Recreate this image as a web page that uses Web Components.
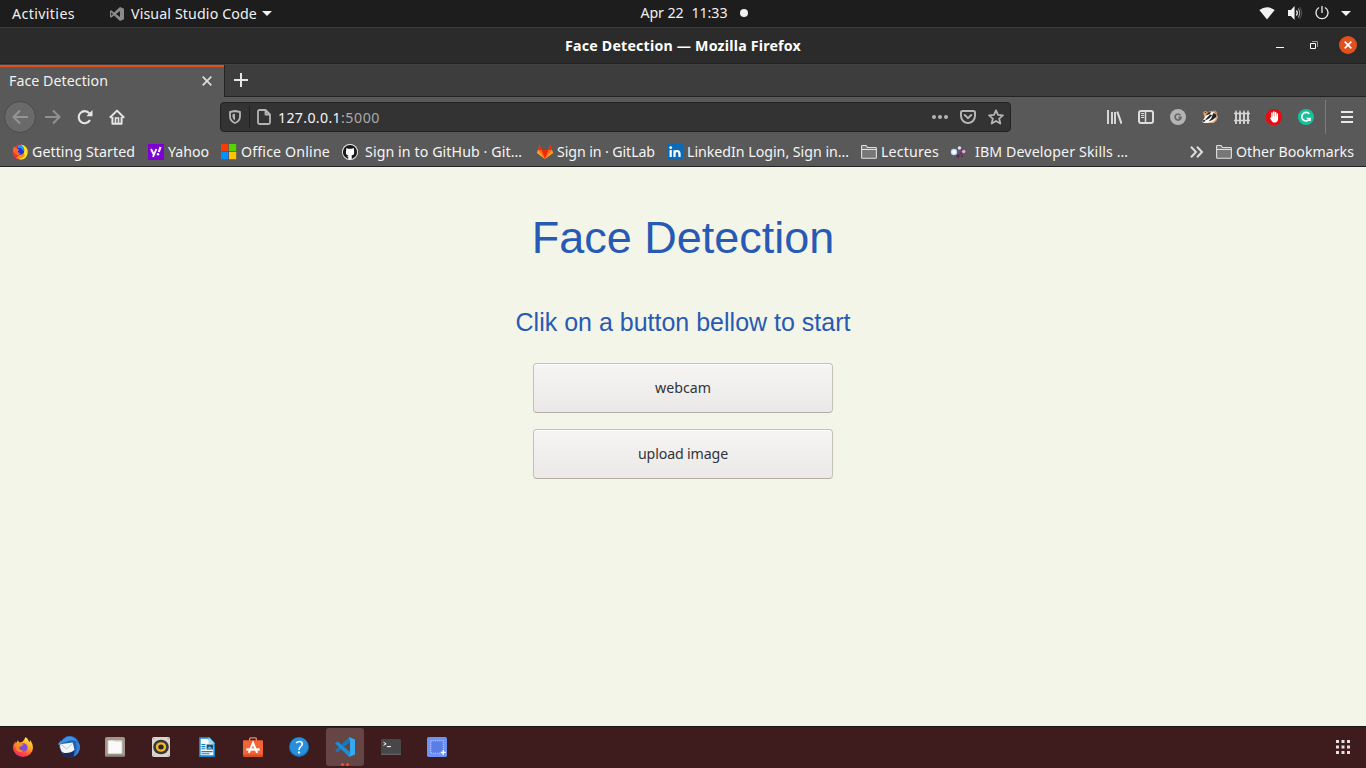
<!DOCTYPE html>
<html lang="en">
<head>
<meta charset="utf-8">
<title>Face Detection</title>
<style>
html,body{margin:0;height:100%;overflow:hidden;background:#f3f5e8;font-family:"Noto Sans","Open Sans",sans-serif}
</style>
</head>
<body>
<desk-top></desk-top>
<script>
const ICONS = {
  code: [14,14,'<path fill="#8a8a8a" d="M10 0l4 1.700v10.600L10 14 4 8.500 1.200 10.800 0 10V4l1.200-.8L4 5.500zM10 4L6 7l4 3zM1.200 5.300v3.400L3 7z"/>'],
  caret: [10,5,'<path fill="#f2f2f2" d="M0 0h10L5 5z"/>'],
  wifi: [16,13,'<path fill="#f2f2f2" d="M.3 3Q8-2.600 15.700 3L8 12.500z"/>'],
  sound: [16,14,'<path fill="#f2f2f2" d="M0 4h3l4-4v14l-4-4H0z"/><path d="M9 4.500q2 2.500 0 5" fill="none" stroke="#f2f2f2" stroke-width="1.300"/><path d="M11 2.500q3 4.500 0 9" fill="none" stroke="#aaa" stroke-width="1.100"/><path d="M12.500 1q4 6 0 12" fill="none" stroke="#555"/>'],
  power: [14,14,'<path d="M4 1.500a6 6 0 1 0 6 0M7 0v7" fill="none" stroke="#eee" stroke-width="1.300"/>'],
  restore: [8,8,'<path d="M.5 2.500h5v5h-5z" fill="none" stroke="#fff"/><path d="M2 .5h5.500V6" fill="none" stroke="#999"/>'],
  wclose: [18,18,'<circle cx="9" cy="9" r="9" fill="#e2501d"/><path d="M5.700 5.700l6.600 6.600m0-6.600l-6.600 6.600" stroke="#fff" stroke-width="1.700"/>'],
  x: [10,10,'<path d="M.7.7l8.600 8.600m0-8.600L.7 9.300" stroke="#dedede" stroke-width="1.700"/>'],
  plus: [14,14,'<path d="M7 0v14M0 7h14" stroke="#e6e6e6" stroke-width="2"/>'],
  back: [16,16,'<path d="M8 1.500L1.500 8 8 14.500M1.500 8H16" fill="none" stroke="#949494" stroke-width="2"/>'],
  forward: [16,16,'<path d="M8 1.500L14.500 8 8 14.500M14.500 8H0" fill="none" stroke="#919191" stroke-width="2"/>'],
  reload: [16,16,'<path d="M13 11A6 6 0 1 1 12.300 4.300" fill="none" stroke="#e6e6e6" stroke-width="2.100"/><path d="M15.500 1v6.200H9.300z" fill="#e6e6e6"/>'],
  home: [16,16,'<path d="M.8 8.800L8 1.600l7.200 7.200M3.400 8v6.800h9.200V8" fill="none" stroke="#e6e6e6" stroke-width="2" stroke-linejoin="round"/><path d="M6.500 14V9h3v5" fill="none" stroke="#e6e6e6" stroke-width="1.600"/>'],
  shield: [12,14,'<path d="M6 1L11 2v4.500Q11 11 6 13 1 11 1 6.500V2z" fill="none" stroke="#b5b5b5" stroke-width="1.800" stroke-linejoin="round"/><path d="M6 3.700v6.600Q3.500 9 3.500 6.500V4.200z" fill="#b5b5b5"/>'],
  page: [14,16,'<path d="M8.500 1H2.500Q1 1 1 2.500v11Q1 15 2.500 15h9q1.500 0 1.500-1.500V5.500zM8.500 1v4.500H13" fill="none" stroke="#b5b5b5" stroke-width="1.800" stroke-linejoin="round"/>'],
  dots: [16,4,'<g fill="#b5b5b5"><circle cx="2" cy="2" r="2"/><circle cx="8" cy="2" r="2"/><circle cx="14" cy="2" r="2"/></g>'],
  pocket: [16,14,'<path d="M2.500 1h11Q15 1 15 2.500V6A7 7 0 0 1 1 6V2.500Q1 1 2.500 1z" fill="none" stroke="#b5b5b5" stroke-width="2"/><path d="M4.700 5L8 8.200 11.300 5" fill="none" stroke="#b5b5b5" stroke-width="2" stroke-linecap="round"/>'],
  star: [16,16,'<path d="M8 1.300l2 4.500 4.900.5-3.700 3.300 1.100 4.900L8 12l-4.300 2.500 1.100-4.900L1.100 6.300 6 5.800z" fill="none" stroke="#b5b5b5" stroke-width="1.800" stroke-linejoin="round"/>'],
  library: [16,14,'<path d="M2 0v14M6 2v12M9 2v12" stroke="#dcdcdc" stroke-width="1.900"/><path d="M11.300 1.700L15.500 13.700" stroke="#dcdcdc" stroke-width="2"/>'],
  sidebar: [16,14,'<rect x="1" y="1" width="14" height="12" rx="2" fill="none" stroke="#dcdcdc" stroke-width="2"/><path d="M7.500 1v12" stroke="#dcdcdc" stroke-width="1.500"/><path d="M3 3.500h3M3 5.500h3M3 7.500h3" stroke="#dcdcdc"/>'],
  gray: [16,16,'<circle cx="8" cy="8" r="8" fill="#b4b4b4"/><path d="M10.400 6.200A3 3 0 1 0 11 8.300H8.300" fill="none" stroke="#666" stroke-width="1.700"/>'],
  badger: [17,14,'<path d="M1.500 3.500Q1 1 4 1.200q1 0 2 1.300Q8 .8 10 1l1.500.3Q13 0 15 1q1.500 1.500.5 3.500L17 6.500l-1.500 4-3 2.500H2L0 11.500 3 7.500z" fill="#e3a577"/><path d="M3.500 6.500L8 2l6 .7 1.500 4-1.500 3-3 2-5 1.300H2L1 11z" fill="#fff"/><path d="M4 5.500l2.500-3 3-.8-1 2.300zM4 9l4.500-4.500L11 5 7.500 8.500l-4 2zM12 3l2.500.7 1 3-2 1.500L11 10l-4 1.500L10 8z" fill="#272322"/><path d="M.8 10.500L3 9.700l.5 1.500L1.500 12z" fill="#272322"/><path d="M3 2.500l1.500.3M13.500 1.500l1 1" stroke="#272322"/>'],
  fence: [16,14,'<path d="M2 14V1.500M6 14V1.500M10 14V1.500M14 14V1.500" stroke="#d5d5d5" stroke-width="1.900"/><path d="M0 3.500h16M0 10.500h16" stroke="#d5d5d5" stroke-width="1.300"/><path d="M1 1.500L2 0l1 1.500zM5 1.500L6 0l1 1.500zM9 1.500L10 0l1 1.500zM13 1.500L14 0l1 1.500z" fill="#d5d5d5"/>'],
  adblock: [16,16,'<path d="M4.700 0h6.600L16 4.700v6.600L11.300 16H4.700L0 11.300V4.700z" fill="#e40d13"/><path d="M6 4v5M7.800 3v5M9.600 3.500v5M11.300 5v5" stroke="#fff" stroke-width="1.500" stroke-linecap="round"/><path d="M5.300 7.500H12V10q0 3-2 3.500H7.500Q6 13 4 9l1-.7 1 1z" fill="#fff"/>'],
  grammarly: [16,16,'<circle cx="8" cy="8" r="8" fill="#15c39a"/><path d="M11.300 4.800A4.300 4.300 0 1 0 12 9.500H8.600M12 8.800v3.200" fill="none" stroke="#fff" stroke-width="1.600"/>'],
  menu: [12,12,'<path d="M0 1h12M0 6h12M0 11h12" stroke="#e8e8e8" stroke-width="2"/>'],
  firefox: [24,24,'<defs><linearGradient id="a" x1=".8" y1="0" x2=".3" y2="1"><stop stop-color="#fff04a"/><stop offset=".45" stop-color="#ffa02a"/><stop offset=".75" stop-color="#ff4a3f"/><stop offset="1" stop-color="#e9257c"/></linearGradient></defs><path d="M15 0q3 2 4 5l1.500 1-.3-3Q24 8 24 13A12 11 0 0 1 0 13Q0 9 3 5v3l3-4 1.500 2.700L11 6q2-1 4-6z" fill="url(#a)"/><circle cx="12.500" cy="12.500" r="5" fill="#7950d8"/><path d="M3 8q5-2 6 0l4 1-3 2q-3 0-3 2.500 2 3.500 6 2.500-4 4-9-.5z" fill="#ff8a28"/>'],
  oldfox: [16,16,'<circle cx="8" cy="8" r="7.500" fill="#ff2a3c"/><path d="M9 .5Q16 2 15.700 8.500 15 15 9 15.700l-3-1Q12 13 12 8 12 4 9 .5z" fill="#ffe11e"/><path d="M4 14q6 2 9-3l-2-2-5 3z" fill="#ff8a1c"/><circle cx="8" cy="6.500" r="4.300" fill="#1b35d8"/><path d="M6.500 1.500Q9 0 11 2.500q1.500 3 .5 5L9 4 5.500 4z" fill="#1f9df0"/><path d="M1.500 3l2 .5L7 5.500 6 7q-.5 2 2.500 2L7 11Q2 11 1 6z" fill="#ff6a1f"/>'],
  yahoo: [16,16,'<path fill="#7e00d2" d="M0 0h16v16H0z"/><path d="M3 5l2.700 5.300M8.400 5L5 13" stroke="#fff" stroke-width="1.900"/><path d="M12.500 3L10.800 8" stroke="#fff" stroke-width="2.100"/><circle cx="10" cy="10.200" r="1.200" fill="#fff"/>'],
  office: [16,16,'<path fill="#ff3c00" d="M0 0h7.200v7.200H0z"/><path fill="#55d400" d="M8 0h7.200v7.200H8z"/><path fill="#0090ff" d="M0 8h7.200v7.200H0z"/><path fill="#ffc300" d="M8 8h7.200v7.200H8z"/>'],
  github: [16,16,'<circle cx="8" cy="8" r="8" fill="#eee"/><circle cx="8" cy="8" r="7.100" fill="#191717"/><path d="M4.200 4l2 .8h3.600L12 4v2.300q1 5-2.300 5v4H6.300v-2l-2-1 2 .2v-1Q3 11 4.200 6z" fill="#fff"/>'],
  gitlab: [16,14,'<path d="M0 8L2.700 0l2 5h6.600l2-5L16 8l-8 6z" fill="#fc6d26"/><path d="M4.500 5h7L8 14z" fill="#f52900"/><path d="M2.700 0l2 5H1zM13.300 0l-2 5H15z" fill="#f52900"/><path d="M0 8l1-3 7 9zM16 8l-1-3-7 9z" fill="#fca326"/>'],
  linkedin: [16,16,'<path fill="#0a6cb9" d="M0 0h16v16H0z"/><circle cx="3.700" cy="3.700" r="1.400" fill="#fff"/><path d="M3.700 6v7M7.500 13V6.200M7.500 10q0-3 2.500-3t2.500 3v3" fill="none" stroke="#fff" stroke-width="2.200"/>'],
  folder: [16,14,'<path d="M.6 12.500V1.200Q.6.500 1.300.5H5l1.500 2h8.200q.7 0 .7.700v9.300q0 .8-.7.800H1.300q-.7 0-.7-.8zM.6 4.500h14.800" fill="#777" stroke="#dfdfdf" stroke-width="1.100"/>'],
  ibm: [16,12,'<path d="M4 6l4 4 5-4.500L9.500 1.500" stroke="#74276d" stroke-width="1.300" fill="none"/><circle cx="4" cy="6" r="3.200" fill="#b8dbfa"/><circle cx="4" cy="6" r="1.900" fill="#fff"/><circle cx="9.500" cy="2" r="1.800" fill="#e3dcf7"/><circle cx="13.700" cy="5.500" r="1.800" fill="#dfa7dd"/><circle cx="8" cy="10.500" r="1.300" fill="#642057"/><circle cx="12" cy="10" r="1" fill="#642057"/>'],
  chevrons: [13,12,'<path d="M1 .7L6 6l-5 5.300M7 .7L12 6l-5 5.300" fill="none" stroke="#dcdcdc" stroke-width="2"/>'],
  thunderbird: [24,24,'<path d="M4 5Q8-1 15 0q8 2 9 11 0 10-9 12.500-6 1-10-4L1 12Q1 8 4 5z" fill="#1e62b4"/><path d="M9 1q8-2 13 6-5-4-12-1L3 8Q5 3 9 1z" fill="#3f92e2"/><path d="M19 6q4 9-3 17 8-3 8-12-1-4-5-5z" fill="#3a80d0"/><path d="M12 17l6-4-1 10-5 1q-5-1-7-5z" fill="#1a2a5c"/><path d="M2 9l14-2 2 8q-4 4-11 3.500L4 17Q2 13 2 9z" fill="#f5f6f8"/><path d="M3 9l6.500 5L16 8" fill="none" stroke="#b4bcc6"/><path d="M0 9l3-4 2 2-3 3z" fill="#3f92e2"/>'],
  files: [24,24,'<rect width="24" height="24" rx="2" fill="#a0968a"/><path d="M1 23h22" stroke="#746b62" stroke-width="1.500"/><rect x="3" y="3.500" width="18" height="17" rx="1.500" fill="#cdc7be"/><path d="M5 4.500h5l1.500 1H19q1 0 1 1v12q0 1-1 1H5q-1 0-1-1v-13q0-1 1-1z" fill="#fafafa"/>'],
  music: [20,24,'<rect width="20" height="24" rx="2" fill="#dcd5cf"/><circle cx="10" cy="12" r="8.700" fill="#373737"/><circle cx="10" cy="12" r="5.800" fill="#f2b928"/><circle cx="10" cy="12" r="3" fill="#292929"/><g fill="#999"><circle cx="2" cy="2" r=".7"/><circle cx="18" cy="2" r=".7"/><circle cx="2" cy="22" r=".7"/><circle cx="18" cy="22" r=".7"/></g>'],
  writer: [20,24,'<path d="M1 0h12l7 7v16q0 1-1 1H1q-1 0-1-1V1q0-1 1-1z" fill="#1683c3"/><path d="M2 2h9l7 7v13H2z" fill="#f4fafd"/><path d="M12 0l8 8h-8z" fill="#a5d6f2"/><path d="M3 9h5M3 11.500h5M3 14h5M3 17.500h14M3 20h10" stroke="#1683c3" stroke-width="1.300"/><path fill="#164e70" d="M9.500 9h8v6h-8z"/><path d="M10 14l3-3 4 3" fill="#68bce4"/>'],
  software: [24,24,'<path d="M8 5V2q0-1 1-1h6q1 0 1 1v3" fill="none" stroke="#d99169" stroke-width="1.600"/><path d="M1 4h22q1 0 1 1v17q0 2-2 2H2q-2 0-2-2V5q0-1 1-1z" fill="#f46335"/><path d="M0 21h24v1q0 2-2 2H2q-2 0-2-2z" fill="#d74e28"/><path d="M7 19l5-12 5 12" fill="none" stroke="#fff" stroke-width="2.500"/><path d="M4 15h16" stroke="#fff" stroke-width="2.800"/>'],
  help: [24,24,'<circle cx="12" cy="12" r="12" fill="#156fb5"/><circle cx="12" cy="11.500" r="11" fill="#278fdc"/><path d="M8.500 7q4-3 7-.5 1.500 3-1.500 5-2 1.500-2 4" fill="none" stroke="#fff" stroke-width="1.900"/><circle cx="12" cy="18.500" r="1.400" fill="#fff"/>'],
  vscode: [24,24,'<path d="M17 0l1 6L3 18.500 0 16.500z" fill="#1b76b8"/><path d="M17 24l1-6L3 5.500 0 7.500z" fill="#1b8fda"/><path d="M17 0l7 3v18l-7 3 1-6V6z" fill="#35a9ef"/>'],
  terminal: [24,20,'<rect width="24" height="20" rx="1.500" fill="#474747"/><path d="M0 19h24" stroke="#727272"/><path d="M3 4l3.200 2L3 8" fill="none" stroke="#fff" stroke-width="1.200"/><path d="M7 9.500h5" stroke="#fff" stroke-width="1.300"/>'],
  screenshot: [24,24,'<rect width="24" height="24" rx="2" fill="#6d92fa"/><path d="M4.500 4.500h15v15h-15z" fill="#5b7de6" stroke="#cbd8ff" stroke-width="1.300" stroke-dasharray="1.200 1.200"/><path d="M19.500 15.500v6M16.500 18.500h6" stroke="#fff" stroke-width="1.500"/>'],
  apps: [14,14,'<path fill="#e7dfe0" d="M0 0h3v3H0zM5.500 0h3v3h-3zM11 0h3v3h-3zM0 5.500h3v3H0zM5.500 5.500h3v3h-3zM11 5.500h3v3h-3zM0 11h3v3H0zM5.500 11h3v3h-3zM11 11h3v3h-3z"/>']
};

class UiIcon extends HTMLElement {
  connectedCallback() {
    const [w, h, body] = ICONS[this.getAttribute('name')];
    const dw = this.getAttribute('w') || w, dh = this.getAttribute('h') || h;
    this.attachShadow({mode:'open'}).innerHTML =
      `<style>:host{display:block;flex:none;width:${dw}px;height:${dh}px}svg{display:block}</style>
       <svg width="${dw}" height="${dh}" viewBox="0 0 ${w} ${h}" preserveAspectRatio="none" fill-rule="evenodd">${body}</svg>`;
  }
}
customElements.define('ui-icon', UiIcon);

/* One-line label whose tracking is adjusted to fill the given width. */
class UiLabel extends HTMLElement {
  connectedCallback() {
    const w = +this.getAttribute('w');
    this.attachShadow({mode:'open'}).innerHTML =
      `<style>:host{display:block;flex:none;width:${w}px;font-size:14.2px;line-height:20px;white-space:pre}span{display:inline-block}</style><span><slot></slot></span>`;
    const span = this.shadowRoot.querySelector('span');
    const n = this.textContent.length;
    span.style.letterSpacing = ((w - span.getBoundingClientRect().width) / n) + 'px';
  }
}
customElements.define('ui-label', UiLabel);

const define = (tag, html) => {
  const t = document.createElement('template');
  t.innerHTML = html;
  customElements.define(tag, class extends HTMLElement {
    constructor() { super(); this.attachShadow({mode:'open'}).append(t.content.cloneNode(true)); }
  });
};

define('top-bar', `<style>
:host{display:grid;grid-template-columns:1fr auto 1fr;height:27px;box-sizing:border-box;background:#1d1d1d;color:#f0f0f0;align-items:center}
div{display:flex;align-items:center}
.l{padding-left:12px}.l ui-icon[name=code]{margin:0 7px 0 35px}.l ui-icon[name=caret]{margin-left:5px}
.c{gap:8px;padding:0 0 1px 22px}.c i{width:8px;height:8px;border-radius:50%;background:#f0f0f0;margin-left:4px}
.r{justify-content:flex-end;padding:0 15px 1px 0}
</style>
<div class="l"><ui-label w="63">Activities</ui-label><ui-icon name="code"></ui-icon><ui-label w="126">Visual Studio Code</ui-label><ui-icon name="caret"></ui-icon></div>
<div class="c"><ui-label w="43">Apr 22</ui-label><ui-label w="36">11:33</ui-label><i></i></div>
<div class="r"><ui-icon name="wifi" style="margin-right:13px"></ui-icon><ui-icon name="sound" w="15" style="margin-right:12px"></ui-icon><ui-icon name="power" style="margin-right:12px"></ui-icon><ui-icon name="caret"></ui-icon></div>`);

define('title-bar', `<style>
:host{display:grid;grid-template-columns:1fr auto 1fr;align-items:center;height:37px;box-sizing:border-box;border-top:1px solid #3b3b3b;border-bottom:1px solid #222;background:#2b2b2b;color:#fff;font-weight:700}
.w{display:flex;align-items:center;justify-content:flex-end;padding:0 9px 2px 0}
.m{width:8px;height:1px;background:#fff;margin:5px 26px 0 0}
</style><span></span><ui-label w="236">Face Detection — Mozilla Firefox</ui-label>
<div class="w"><i class="m"></i><ui-icon name="restore" style="margin-right:21px"></ui-icon><ui-icon name="wclose"></ui-icon></div>`);

define('tab-strip', `<style>
:host{display:flex;height:33px;background:#3d3d3d;color:#f2f2f2;border-top:1px solid #424242;box-sizing:border-box}
.t{width:224px;box-sizing:border-box;background:#595959;border-top:2px solid #e1501f;padding:0 12px 2px 9px;display:flex;align-items:center;justify-content:space-between}
.n{flex:1;border-left:1px solid #242424;border-bottom:1px solid #242424;display:flex;align-items:center;padding:0 0 2px 9px}
</style><div class="t"><ui-label w="99">Face Detection</ui-label><ui-icon name="x"></ui-icon></div><div class="n"><ui-icon name="plus"></ui-icon></div>`);

define('url-bar', `<style>
:host{display:flex;align-items:center;width:791px;height:30px;box-sizing:border-box;border:1px solid #222;border-radius:4px;background:#333;color:#f5f5f5;padding:0 6px 0 8px}
i{width:1px;height:22px;background:#202020;margin:0 7px 0 8px}
b{font-weight:400;color:#aaa}.g{flex:1}
ui-label{padding-top:2px}
</style><ui-icon name="shield"></ui-icon><i></i><ui-icon name="page" style="margin-right:7px"></ui-icon><ui-label w="63">127.0.0.1</ui-label><b><ui-label w="39">:5000</ui-label></b><span class="g"></span><ui-icon name="dots" style="margin-right:12px"></ui-icon><ui-icon name="pocket" style="margin-right:12px"></ui-icon><ui-icon name="star"></ui-icon>`);

define('nav-bar', `<style>
:host{display:flex;align-items:center;height:40px;background:#595959}
.b{width:30px;height:30px;border:1px solid #4b4b4b;border-radius:50%;background:#6a6a6a;display:grid;place-items:center;margin-left:4px;flex:none}
.e{flex:1;display:flex;justify-content:flex-end;gap:16px;align-items:center}
i{width:1px;height:34px;background:#7b7b7b;margin:0 15px 0 11px}
</style><div class="b"><ui-icon name="back"></ui-icon></div>
<ui-icon name="forward" style="margin-left:9px"></ui-icon><ui-icon name="reload" style="margin-left:16px"></ui-icon><ui-icon name="home" style="margin:0 95px 0 16px"></ui-icon>
<url-bar></url-bar>
<div class="e"><ui-icon name="library"></ui-icon><ui-icon name="sidebar"></ui-icon><ui-icon name="gray"></ui-icon><ui-icon name="badger" w="16"></ui-icon><ui-icon name="fence"></ui-icon><ui-icon name="adblock"></ui-icon><ui-icon name="grammarly"></ui-icon></div>
<i></i><ui-icon name="menu" style="margin-right:13px"></ui-icon>`);

class BookmarkItem extends HTMLElement {
  connectedCallback() {
    this.attachShadow({mode:'open'}).innerHTML =
      `<style>:host{display:flex;align-items:center;gap:${this.getAttribute('gap') || 4}px}</style>
       <ui-icon name="${this.getAttribute('icon')}"></ui-icon><slot></slot>`;
  }
}
customElements.define('bookmark-item', BookmarkItem);

define('bookmarks-bar', `<style>
:host{display:flex;align-items:center;height:30px;box-sizing:border-box;padding:0 12px 0 12px;border-bottom:1px solid #222;background:#595959;color:#f5f5f5}
bookmark-item{margin-right:12px}.g{flex:1}
</style>
<bookmark-item icon="oldfox"><ui-label w="103">Getting Started</ui-label></bookmark-item>
<bookmark-item icon="yahoo" style="margin-left:1px"><ui-label w="41">Yahoo</ui-label></bookmark-item>
<bookmark-item icon="office"><ui-label w="89">Office Online</ui-label></bookmark-item>
<bookmark-item icon="github" gap="7" style="margin-right:15px"><ui-label w="157">Sign in to GitHub · Git…</ui-label></bookmark-item>
<bookmark-item icon="gitlab"><ui-label w="98">Sign in · GitLab</ui-label></bookmark-item>
<bookmark-item icon="linkedin"><ui-label w="162">LinkedIn Login, Sign in…</ui-label></bookmark-item>
<bookmark-item icon="folder" style="margin-right:11px"><ui-label w="58">Lectures</ui-label></bookmark-item>
<bookmark-item icon="ibm" gap="9" style="margin:0"><ui-label w="153">IBM Developer Skills …</ui-label></bookmark-item>
<span class="g"></span><ui-icon name="chevrons" style="margin-right:13px"></ui-icon>
<bookmark-item icon="folder" style="margin:0"><ui-label w="118">Other Bookmarks</ui-label></bookmark-item>`);

define('push-button', `<style>
:host{display:block}
button{display:flex;align-items:center;justify-content:center;width:300px;height:50px;padding:0;border:1px solid #c5c1b8;border-bottom-color:#b5aea6;border-radius:4px;background:linear-gradient(#f6f5f4,#ebe9e8);box-shadow:inset 0 1px #fff;color:#303436;font-family:inherit}
</style><button><slot></slot></button>`);

define('face-page', `<style>
:host{display:flex;flex-direction:column;align-items:center;flex:1;background:#f3f5e8;color:#285ab4;font-family:"Liberation Sans",Arial,sans-serif}
h1{font-size:45px;line-height:52px;font-weight:400;margin:45px 0 0}
h2{font-size:25px;line-height:30px;font-weight:400;margin:43px 0 26px}
push-button{font-family:"Noto Sans",sans-serif;margin-bottom:16px}
</style><h1>Face Detection</h1><h2>Clik on a button bellow to start</h2>
<push-button><ui-label w="56">webcam</ui-label></push-button>
<push-button><ui-label w="90">upload image</ui-label></push-button>`);

define('dock-item', `<style>
:host{position:relative;display:grid;place-items:center;width:38px;height:38px;border-radius:3px}
:host([active]){background:#664545}
.d{display:none;position:absolute;bottom:0;left:15px;gap:2px}
:host([active]) .d{display:flex}
.d i{width:3px;height:3px;border-radius:50%;background:#ef5423}
</style><slot></slot><div class="d"><i></i><i></i></div>`);

define('task-dock', `<style>
:host{display:flex;align-items:center;height:42px;box-sizing:border-box;border-top:1px solid #1c1515;background:#3e1b1c;padding:0 16px 1px 4px;gap:8px}
.g{flex:1}
</style>
<dock-item><ui-icon name="firefox" w="20" h="20"></ui-icon></dock-item>
<dock-item><ui-icon name="thunderbird" w="22" h="22"></ui-icon></dock-item>
<dock-item><ui-icon name="files" w="20" h="20"></ui-icon></dock-item>
<dock-item><ui-icon name="music" w="18" h="20"></ui-icon></dock-item>
<dock-item><ui-icon name="writer" w="16" h="20"></ui-icon></dock-item>
<dock-item><ui-icon name="software" w="20" h="20"></ui-icon></dock-item>
<dock-item><ui-icon name="help" w="20" h="20"></ui-icon></dock-item>
<dock-item active><ui-icon name="vscode" w="20" h="20"></ui-icon></dock-item>
<dock-item><ui-icon name="terminal" w="20" h="16"></ui-icon></dock-item>
<dock-item><ui-icon name="screenshot" w="20" h="20"></ui-icon></dock-item>
<span class="g"></span><ui-icon name="apps"></ui-icon>`);

define('desk-top', `<style>:host{display:flex;flex-direction:column;width:1366px;height:768px}</style>
<top-bar></top-bar><title-bar></title-bar><tab-strip></tab-strip><nav-bar></nav-bar><bookmarks-bar></bookmarks-bar><face-page></face-page><task-dock></task-dock>`);
</script>
</body>
</html>
